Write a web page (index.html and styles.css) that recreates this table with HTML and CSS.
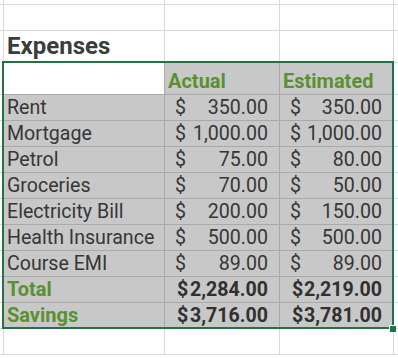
FILE: index.html
```html
<!DOCTYPE html>
<html>
<head>
<meta charset="utf-8">
<link rel="stylesheet" href="styles.css">
</head>
<body>
<div class="sheet">
  <div class="grid">
    <!-- row 0 (partial) -->
    <div class="c"></div><div class="c"></div><div class="c"></div><div class="c"></div><div class="c"></div>
    <!-- row 1 -->
    <div class="c"></div><div class="c"></div><div class="c"></div><div class="c"></div><div class="c"></div>
    <!-- row 2 title -->
    <div class="c"></div><div class="c title">Expenses</div><div class="c"></div><div class="c"></div><div class="c"></div>
    <!-- header -->
    <div class="c"></div><div class="c in"></div><div class="c in g head">Actual</div><div class="c in g head">Estimated</div><div class="c"></div>

    <div class="c"></div><div class="c in g">Rent</div><div class="c in g num"><span>$</span><span>350.00</span></div><div class="c in g num"><span>$</span><span>350.00</span></div><div class="c"></div>
    <div class="c"></div><div class="c in g">Mortgage</div><div class="c in g num"><span>$</span><span>1,000.00</span></div><div class="c in g num"><span>$</span><span>1,000.00</span></div><div class="c"></div>
    <div class="c"></div><div class="c in g">Petrol</div><div class="c in g num"><span>$</span><span>75.00</span></div><div class="c in g num"><span>$</span><span>80.00</span></div><div class="c"></div>
    <div class="c"></div><div class="c in g">Groceries</div><div class="c in g num"><span>$</span><span>70.00</span></div><div class="c in g num"><span>$</span><span>50.00</span></div><div class="c"></div>
    <div class="c"></div><div class="c in g">Electricity Bill</div><div class="c in g num"><span>$</span><span>200.00</span></div><div class="c in g num"><span>$</span><span>150.00</span></div><div class="c"></div>
    <div class="c"></div><div class="c in g">Health Insurance</div><div class="c in g num"><span>$</span><span>500.00</span></div><div class="c in g num"><span>$</span><span>500.00</span></div><div class="c"></div>
    <div class="c"></div><div class="c in g">Course EMI</div><div class="c in g num"><span>$</span><span>89.00</span></div><div class="c in g num"><span>$</span><span>89.00</span></div><div class="c"></div>
    <div class="c"></div><div class="c in g head">Total</div><div class="c in g num bold"><span>$</span><span>2,284.00</span></div><div class="c in g num bold"><span>$</span><span>2,219.00</span></div><div class="c"></div>
    <div class="c"></div><div class="c in g head">Savings</div><div class="c in g num bold"><span>$</span><span>3,716.00</span></div><div class="c in g num bold"><span>$</span><span>3,781.00</span></div><div class="c"></div>

    <div class="c"></div><div class="c"></div><div class="c"></div><div class="c"></div><div class="c"></div>
  </div>
  <div class="selection"></div>
  <div class="handle"></div>
</div>
</body>
</html>
```

FILE: styles.css
```css
html, body {
  margin: 0;
  padding: 0;
  background: #ffffff;
}
body {
  width: 398px;
  height: 358px;
  overflow: hidden;
  font-family: Roboto, "Liberation Sans", sans-serif;
  color: #363636;
}
.sheet {
  position: relative;
  width: 398px;
  height: 358px;
  overflow: hidden;
}
.grid {
  display: grid;
  grid-template-columns: 4px 161px 115px 114px 20px;
  grid-template-rows: 5px 26px 32px 32px repeat(9, 26px) 26px;
}
.c {
  box-sizing: border-box;
  border-right: 1px solid #d9d9d9;
  border-bottom: 1px solid #d9d9d9;
  display: flex;
  align-items: flex-end;
  padding: 0 0 1px 3px;
  font-size: 19.6px;
  line-height: 22px;
  white-space: nowrap;
  overflow: visible;
}
.c.in {
  border-right-color: #a9a9a9;
  border-bottom-color: #a9a9a9;
}
.c.g {
  background: #c8c8c8;
}
.title {
  font-size: 24px;
  font-weight: 700;
  color: #3c3c3c;
  padding-bottom: 3px;
  line-height: 26px;
}
.head {
  font-weight: 700;
  font-size: 20px;
  color: #5a9130;
  padding-bottom: 2px;
}
.num {
  justify-content: space-between;
  padding-left: 10px;
  padding-right: 11px;
}
.bold {
  font-weight: 700;
  color: #303030;
  padding-left: 12px;
}
.selection {
  position: absolute;
  left: 2px;
  top: 61px;
  width: 392px;
  height: 268px;
  box-sizing: border-box;
  border: 2px solid #217346;
  pointer-events: none;
}
.handle {
  position: absolute;
  left: 390px;
  top: 326px;
  width: 6px;
  height: 6px;
  background: #217346;
  box-shadow: -1px -1px 0 0 #ffffff;
}
```
